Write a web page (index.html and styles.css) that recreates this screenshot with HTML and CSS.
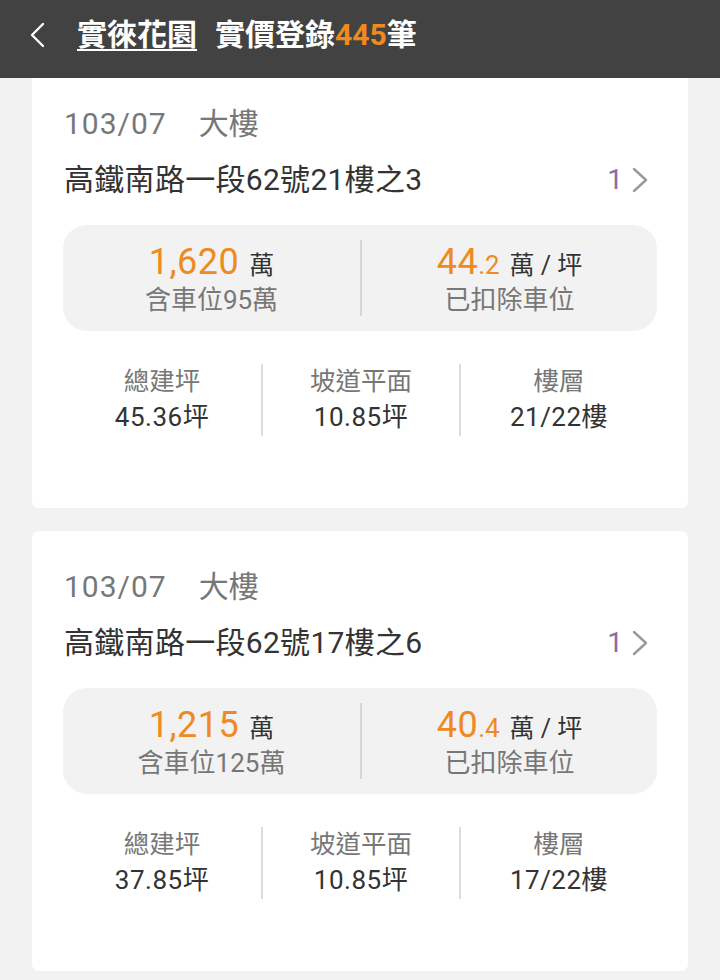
FILE: index.html
```html
<!DOCTYPE html>
<html lang="zh-Hant">
<head>
<meta charset="utf-8">
<title>實價登錄</title>
<link rel="stylesheet" href="styles.css">
</head>
<body>
<header class="topbar">
  <svg class="back" width="18" height="28" viewBox="0 0 18 28"><path d="M15 3 L4 14 L15 25" fill="none" stroke="#fff" stroke-width="2.4" stroke-linecap="round" stroke-linejoin="round"/></svg>
  <h1 class="title"><span class="title-link">實徠花園</span><span class="title-rest">實價登錄<span class="count">445</span>筆</span></h1>
</header>
<main class="list">
  <section class="card first">
    <div class="meta"><span class="date">103/07</span><span>大樓</span></div>
    <div class="addr-row">
      <span class="addr">高鐵南路一段62號21樓之3</span>
      <span class="more"><span class="num">1</span><svg width="18" height="28" viewBox="0 0 18 28"><path d="M3 3 L15 14 L3 25" fill="none" stroke="#9a9a9a" stroke-width="2.4" stroke-linecap="round" stroke-linejoin="round"/></svg></span>
    </div>
    <div class="price-box">
      <div class="price-col">
        <div class="price-main"><span class="big">1,620</span><span class="unit">萬</span></div>
        <div class="price-sub">含車位95萬</div>
      </div>
      <div class="price-col">
        <div class="price-main"><span class="big">44</span><span class="dec">.2</span><span class="unit">萬 / 坪</span></div>
        <div class="price-sub">已扣除車位</div>
      </div>
    </div>
    <div class="stats">
      <div class="stat"><div class="label">總建坪</div><div class="value">45.36坪</div></div>
      <div class="stat"><div class="label">坡道平面</div><div class="value">10.85坪</div></div>
      <div class="stat"><div class="label">樓層</div><div class="value">21/22樓</div></div>
    </div>
  </section>
  <section class="card">
    <div class="meta"><span class="date">103/07</span><span>大樓</span></div>
    <div class="addr-row">
      <span class="addr">高鐵南路一段62號17樓之6</span>
      <span class="more"><span class="num">1</span><svg width="18" height="28" viewBox="0 0 18 28"><path d="M3 3 L15 14 L3 25" fill="none" stroke="#9a9a9a" stroke-width="2.4" stroke-linecap="round" stroke-linejoin="round"/></svg></span>
    </div>
    <div class="price-box">
      <div class="price-col">
        <div class="price-main"><span class="big">1,215</span><span class="unit">萬</span></div>
        <div class="price-sub">含車位125萬</div>
      </div>
      <div class="price-col">
        <div class="price-main"><span class="big">40</span><span class="dec">.4</span><span class="unit">萬 / 坪</span></div>
        <div class="price-sub">已扣除車位</div>
      </div>
    </div>
    <div class="stats">
      <div class="stat"><div class="label">總建坪</div><div class="value">37.85坪</div></div>
      <div class="stat"><div class="label">坡道平面</div><div class="value">10.85坪</div></div>
      <div class="stat"><div class="label">樓層</div><div class="value">17/22樓</div></div>
    </div>
  </section>
</main>
</body>
</html>
```
FILE: styles.css
```css
* { box-sizing: border-box; }
html, body {
  margin: 0;
  padding: 0;
  background: #f2f2f2;
  font-family: Roboto, "Noto Sans CJK TC", sans-serif;
  height: 980px;
  overflow: hidden;
}
.topbar {
  height: 78px;
  background: #424242;
  display: flex;
  align-items: center;
  padding-left: 28px;
  position: relative;
  z-index: 2;
}
.back { display: block; margin-top: -9px; }
.title {
  margin: 0 0 0 31px;
  margin-top: -8px;
  font-size: 30px;
  font-weight: 700;
  color: #fff;
  display: flex;
  gap: 18px;
  line-height: 36px;
}
.title-link { text-decoration: underline; text-underline-offset: 4px; text-decoration-thickness: 2px; }
.count { color: #f08a1c; }
.list {
  display: flex;
  flex-direction: column;
  gap: 23px;
  padding: 0 32px;
  overflow: hidden;
  height: 902px;
}
.card {
  background: #fff;
  border-radius: 7px;
  padding: 38px 31px 72px;
  flex-shrink: 0;
}
.card.first { margin-top: -10px; }
.meta {
  display: flex;
  gap: 32px;
  font-size: 30px;
  line-height: 36px;
  color: #777;
  padding-left: 1px;
}
.date { letter-spacing: 1px; }
.addr-row {
  margin-top: 20px;
  display: flex;
  justify-content: space-between;
  align-items: center;
  height: 36px;
}
.addr { font-size: 30px; line-height: 36px; color: #333; padding-left: 1px; letter-spacing: 0.3px; }
.more { display: flex; align-items: center; gap: 8px; padding-right: 8px; }
.more .num { font-size: 28px; color: #8a6aa8; line-height: 36px; }
.more svg { display: block; }
.price-box {
  margin-top: 27px;
  background: #f2f2f2;
  border-radius: 24px;
  padding: 15px 0;
  display: grid;
  grid-template-columns: 1fr 1fr;
}
.price-col { text-align: center; }
.price-col + .price-col { border-left: 2px solid #d6d6d6; }
.price-main { height: 44px; line-height: 44px; white-space: nowrap; }
.big { font-size: 36px; color: #ee8a22; letter-spacing: 0.5px; }
.dec { font-size: 26px; color: #ee8a22; }
.unit { font-size: 25px; color: #333; margin-left: 10px; }
.price-sub { font-size: 26px; line-height: 32px; color: #777; }
.stats {
  margin-top: 33px;
  display: grid;
  grid-template-columns: 1fr 1fr 1fr;
}
.stat { text-align: center; }
.stat + .stat { border-left: 2px solid #dcdcdc; }
.label { font-size: 25.5px; line-height: 34px; color: #777; }
.value { font-size: 26px; line-height: 38px; color: #333; letter-spacing: 0.5px; }
```
